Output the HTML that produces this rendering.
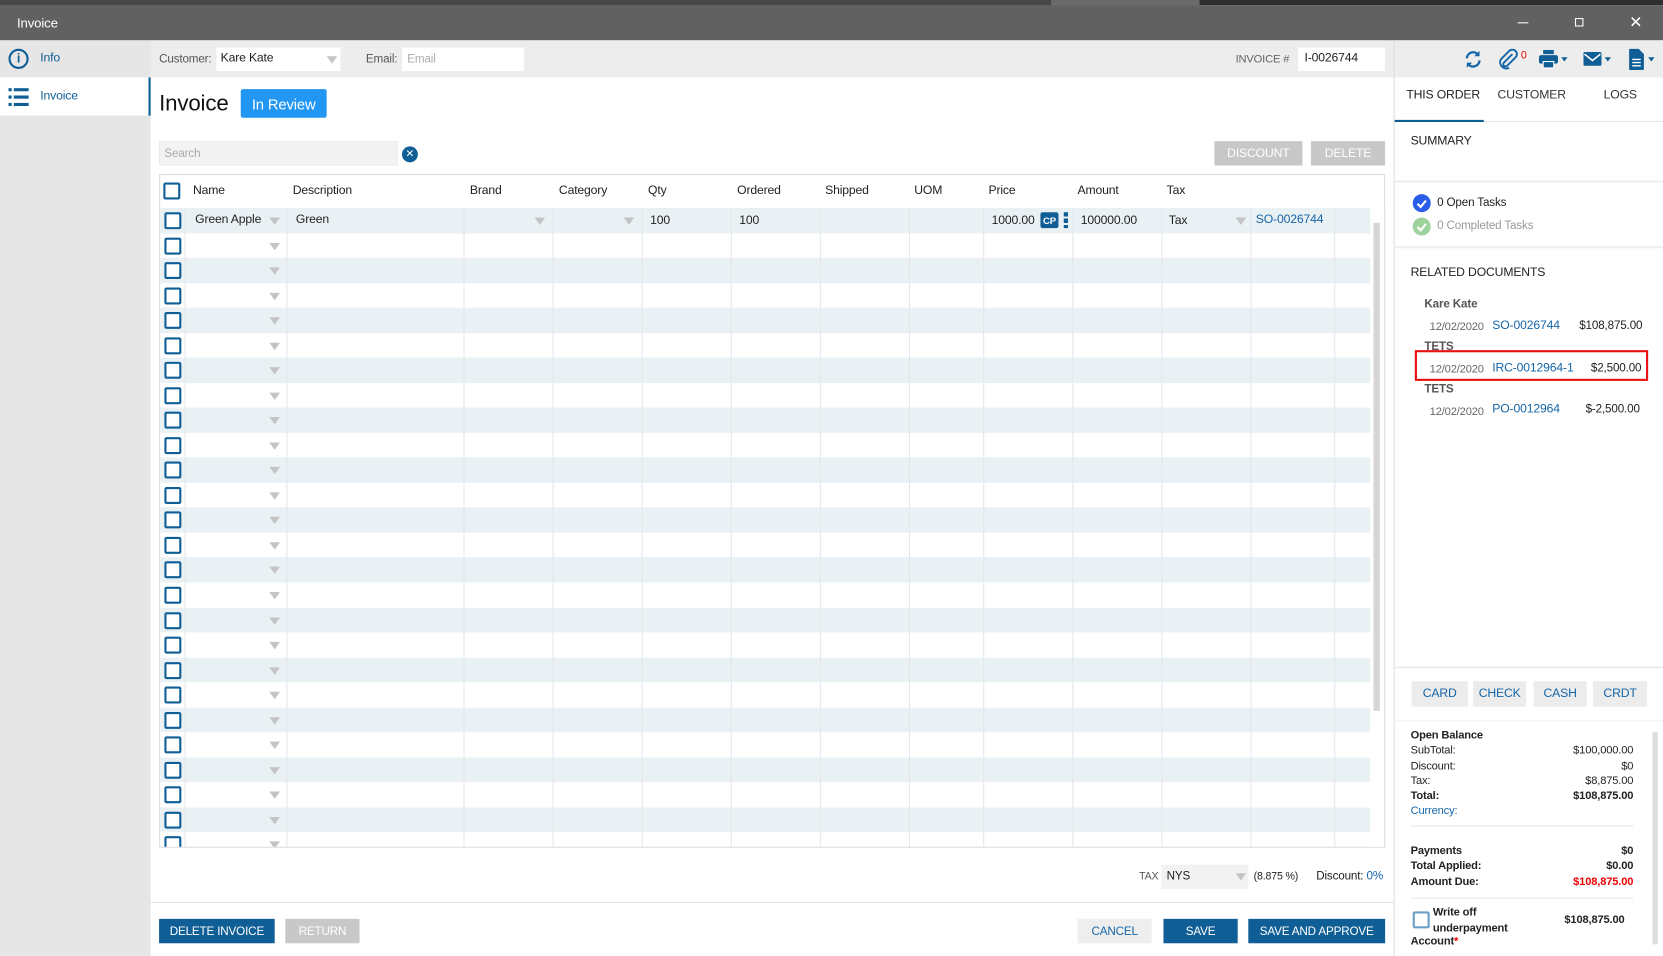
<!DOCTYPE html>
<html><head><meta charset="utf-8"><style>
*{box-sizing:border-box;margin:0;padding:0}
html,body{width:1663px;height:956px;overflow:hidden;background:#fff}
#r{position:absolute;left:0;top:0;width:1568px;height:901px;transform:scale(1.06059,1.06104);transform-origin:0 0;font-family:"Liberation Sans",sans-serif;font-size:11.5px;letter-spacing:-0.15px;color:#222}
.a{position:absolute}
.t{position:absolute;white-space:nowrap}
.btn{position:absolute;display:flex;align-items:center;justify-content:center;font-size:11.5px;color:#fff}
.cb{position:absolute;left:4px;top:4px;width:16px;height:16px;border:2px solid #0f5e95;border-radius:2px;background:#fff}
.dd{position:absolute;width:0;height:0;border-left:5px solid transparent;border-right:5px solid transparent;border-top:7px solid #c4c4c4}
.row{position:relative;height:23.54px}
.row:nth-child(odd){background:#eaf1f5}
.vl{position:absolute;top:31px;bottom:0;width:1px;background:#e3e7ea}
.lbl{font-size:11px}
.blue{color:#1565a8}
</style></head><body><div id="r">
<div class="a" style="left:0;top:0;width:1568px;height:5px;background:#2e2e2e"></div>
<div class="a" style="left:0;top:0;width:991px;height:5px;background:#474747"></div>
<div class="a" style="left:991px;top:0;width:140px;height:5px;background:#6a6a6a"></div>
<div class="a" style="left:0;top:5px;width:1568px;height:33px;background:#616161"></div>
<div class="t" style="left:16px;top:15px;color:#fff;font-size:12.5px">Invoice</div>
<div class="a" style="left:1431px;top:21px;width:10px;height:1px;background:#fff"></div>
<div class="a" style="left:1485px;top:17px;width:8px;height:8px;border:1px solid #fff"></div>
<div class="t" style="left:1536px;top:12px;color:#fff;font-size:15px">✕</div>
<div class="a" style="left:0;top:38px;width:142px;height:863px;background:#e6e6e6"></div>
<div class="a" style="left:0;top:73px;width:140px;height:36px;background:#fff"></div>
<div class="a" style="left:140px;top:73px;width:2px;height:36px;background:#0f5e95"></div>
<div class="a" style="left:8px;top:46px;width:19px;height:19px;border:2px solid #0f5e95;border-radius:50%;color:#0f5e95;font-weight:bold;font-size:12px;text-align:center;line-height:15px">i</div>
<div class="t blue" style="left:38px;top:49px;color:#0f5e95">Info</div>
<svg class="a" style="left:8px;top:83px" width="20" height="17"><g fill="#0f5e95"><rect x="0" y="0" width="3" height="3"/><rect x="5" y="0" width="14" height="3"/><rect x="0" y="7" width="3" height="3"/><rect x="5" y="7" width="14" height="3"/><rect x="0" y="14" width="3" height="3"/><rect x="5" y="14" width="14" height="3"/></g></svg>
<div class="t" style="left:38px;top:85px;color:#0f5e95">Invoice</div>
<div class="a" style="left:142px;top:38px;width:1426px;height:35px;background:#ededed"></div>
<div class="t lbl" style="left:150px;top:50px;color:#555">Customer:</div>
<div class="a" style="left:204px;top:45px;width:117px;height:22px;background:#fff"></div>
<div class="t" style="left:208px;top:49px">Kare Kate</div>
<div class="dd" style="left:308px;top:53px"></div>
<div class="t lbl" style="left:345px;top:50px;color:#555">Email:</div>
<div class="a" style="left:379px;top:45px;width:115px;height:22px;background:#fff"></div>
<div class="t lbl" style="left:384px;top:50px;color:#aaa">Email</div>
<div class="t" style="left:1165px;top:50px;color:#666;font-size:10.5px">INVOICE #</div>
<div class="a" style="left:1224px;top:45px;width:82px;height:22px;background:#fff"></div>
<div class="t" style="left:1230px;top:49px">I-0026744</div>
<div class="a" style="left:1314px;top:38px;width:1px;height:863px;background:#dcdcdc"></div>
<svg class="a" style="left:1380px;top:47px" width="18" height="18" viewBox="0 0 18 18"><path d="M3 8a6 6 0 0 1 11-3M15 10a6 6 0 0 1-11 3" stroke="#1565a8" stroke-width="2.2" fill="none"/><path d="M15 1v5h-5z M3 17v-5h5z" fill="#1565a8"/></svg>
<svg class="a" style="left:1412px;top:46px" width="20" height="20" viewBox="0 0 20 20"><path d="M14 5l-8 8a2 2 0 0 0 3 3l8-8a4 4 0 0 0-6-6l-8 8a6 6 0 0 0 8 8" stroke="#1565a8" stroke-width="1.8" fill="none"/></svg>
<div class="t" style="left:1434px;top:47px;color:#e00;font-size:10px">0</div>
<svg class="a" style="left:1451px;top:47px" width="30" height="18" viewBox="0 0 30 18"><rect x="4" y="0" width="10" height="4" fill="#0f5e95"/><rect x="0" y="5" width="18" height="8" rx="2" fill="#0f5e95"/><rect x="4" y="11" width="10" height="6" fill="#0f5e95" stroke="#fff" stroke-width="1"/><path d="M21 7h6l-3 4z" fill="#0f5e95"/></svg>
<svg class="a" style="left:1493px;top:48px" width="30" height="16" viewBox="0 0 30 16"><rect x="0" y="1" width="17" height="13" rx="1.5" fill="#0f5e95"/><path d="M1 3l7.5 6 7.5-6" stroke="#fff" stroke-width="1.5" fill="none"/><path d="M20 6h6l-3 4z" fill="#0f5e95"/></svg>
<svg class="a" style="left:1536px;top:46px" width="30" height="20" viewBox="0 0 30 20"><path d="M0 1a1 1 0 0 1 1-1h8l5 5v14a1 1 0 0 1-1 1H1a1 1 0 0 1-1-1z" fill="#0f5e95"/><path d="M3 10h8M3 13h8M3 16h8" stroke="#fff" stroke-width="1.3"/><path d="M18 8h6l-3 4z" fill="#0f5e95"/></svg>
<div class="t" style="left:1326px;top:84px;color:#222">THIS ORDER</div>
<div class="t" style="left:1412px;top:84px;color:#333">CUSTOMER</div>
<div class="t" style="left:1512px;top:84px;color:#333">LOGS</div>
<div class="a" style="left:1315px;top:114px;width:253px;height:1px;background:#e6e6e6"></div>
<div class="a" style="left:1315px;top:113px;width:84px;height:2px;background:#0f5e95"></div>
<div class="t" style="left:1330px;top:127px">SUMMARY</div>
<div class="a" style="left:1315px;top:170px;width:253px;height:2px;background:#eee"></div>
<div class="a" style="left:1332px;top:183px;width:17px;height:17px;border-radius:50%;background:#2a5ee8"></div>
<svg class="a" style="left:1332px;top:183px" width="17" height="17"><path d="M4.5 9l3 3 5-6" stroke="#fff" stroke-width="2" fill="none"/></svg>
<div class="t" style="left:1355px;top:185px;font-size:11px">0 Open Tasks</div>
<div class="a" style="left:1332px;top:205px;width:17px;height:17px;border-radius:50%;background:#9ed39e"></div>
<svg class="a" style="left:1332px;top:205px" width="17" height="17"><path d="M4.5 9l3 3 5-6" stroke="#fff" stroke-width="2" fill="none"/></svg>
<div class="t" style="left:1355px;top:207px;font-size:11px;color:#999">0 Completed Tasks</div>
<div class="a" style="left:1315px;top:232px;width:253px;height:2px;background:#eee"></div>
<div class="t" style="left:1330px;top:251px">RELATED DOCUMENTS</div>
<div class="t" style="left:1343px;top:281px;color:#555;font-weight:bold;font-size:11px">Kare Kate</div>
<div class="t" style="left:1348px;top:302px;color:#666;font-size:10.5px">12/02/2020</div>
<div class="t blue" style="left:1407px;top:301px">SO-0026744</div>
<div class="t" style="left:1489px;top:301px;font-size:11px">$108,875.00</div>
<div class="t" style="left:1343px;top:321px;color:#555;font-weight:bold;font-size:11px">TETS</div>
<div class="a" style="left:1334px;top:330px;width:220px;height:29px;border:2px solid #e81010;background:#fff"></div>
<div class="t" style="left:1348px;top:342px;color:#666;font-size:10.5px">12/02/2020</div>
<div class="t blue" style="left:1407px;top:341px">IRC-0012964-1</div>
<div class="t" style="left:1500px;top:341px;font-size:11px">$2,500.00</div>
<div class="t" style="left:1343px;top:361px;color:#555;font-weight:bold;font-size:11px">TETS</div>
<div class="t" style="left:1348px;top:382px;color:#666;font-size:10.5px">12/02/2020</div>
<div class="t blue" style="left:1407px;top:380px">PO-0012964</div>
<div class="t" style="left:1495px;top:380px;font-size:11px">$-2,500.00</div>
<div class="a" style="left:1315px;top:628px;width:253px;height:2px;background:#eee"></div>
<div class="btn" style="left:1331px;top:642px;width:53px;height:24px;background:#ececec;color:#1565a8">CARD</div>
<div class="btn" style="left:1389px;top:642px;width:50px;height:24px;background:#ececec;color:#1565a8">CHECK</div>
<div class="btn" style="left:1446px;top:642px;width:50px;height:24px;background:#ececec;color:#1565a8">CASH</div>
<div class="btn" style="left:1502px;top:642px;width:51px;height:24px;background:#ececec;color:#1565a8">CRDT</div>
<div class="a" style="left:1315px;top:679px;width:253px;height:1px;background:#eee"></div>
<div class="a" style="left:1558px;top:690px;width:5px;height:200px;background:#ddd"></div>
<div style="position:absolute;left:1330px;top:686px;width:210px;font-size:10.5px;line-height:14.3px">
<div style="font-weight:bold">Open Balance</div>
<div style="display:flex;justify-content:space-between"><span>SubTotal:</span><span>$100,000.00</span></div>
<div style="display:flex;justify-content:space-between"><span>Discount:</span><span>$0</span></div>
<div style="display:flex;justify-content:space-between"><span>Tax:</span><span>$8,875.00</span></div>
<div style="display:flex;justify-content:space-between;font-weight:bold"><span>Total:</span><span>$108,875.00</span></div>
<div class="blue">Currency:</div>
</div>
<div class="a" style="left:1330px;top:778px;width:210px;height:1px;background:#e6e6e6"></div>
<div style="position:absolute;left:1330px;top:795px;width:210px;font-size:10.5px;line-height:14.3px;font-weight:bold">
<div style="display:flex;justify-content:space-between"><span>Payments</span><span>$0</span></div>
<div style="display:flex;justify-content:space-between"><span>Total Applied:</span><span>$0.00</span></div>
<div style="display:flex;justify-content:space-between"><span>Amount Due:</span><span style="color:#e00">$108,875.00</span></div>
</div>
<div class="a" style="left:1330px;top:846px;width:210px;height:1px;background:#e6e6e6"></div>
<div class="a" style="left:1332px;top:859px;width:16px;height:16px;border:2px solid #6a9ec4;border-radius:2px"></div>
<div class="t" style="left:1351px;top:853px;font-weight:bold;font-size:10.5px;line-height:14.5px">Write off<br>underpayment</div>
<div class="t" style="left:1330px;top:881px;font-weight:bold;font-size:10.5px">Account<span style="color:#e00">*</span></div>
<div class="t" style="left:1475px;top:861px;font-weight:bold;font-size:10.5px">$108,875.00</div>
<div class="t" style="left:150px;top:86px;font-size:21px;color:#111">Invoice</div>
<div class="btn" style="left:227px;top:84px;width:81px;height:27px;background:#2196f3;border-radius:2px;font-size:14px">In Review</div>
<div class="a" style="left:150px;top:133px;width:225px;height:23px;background:#f3f3f3;border:1px solid #eaeaea"></div>
<div class="t lbl" style="left:155px;top:139px;color:#aaa">Search</div>
<div class="btn" style="left:379px;top:138px;width:15px;height:15px;border-radius:50%;background:#0f5e95;font-size:10px">✕</div>
<div class="btn" style="left:1145px;top:133px;width:83px;height:23px;background:#c8c8c8">DISCOUNT</div>
<div class="btn" style="left:1236px;top:133px;width:70px;height:23px;background:#c8c8c8">DELETE</div>
<div class="a" style="left:150px;top:164px;width:1156px;height:635px;border:1px solid #d8dee3;overflow:hidden">
 <div class="cb" style="left:3px;top:7px"></div>
 <div class="t" style="left:31px;top:9px">Name</div>
 <div class="t" style="left:125px;top:9px">Description</div>
 <div class="t" style="left:292px;top:9px">Brand</div>
 <div class="t" style="left:376px;top:9px">Category</div>
 <div class="t" style="left:460px;top:9px">Qty</div>
 <div class="t" style="left:544px;top:9px">Ordered</div>
 <div class="t" style="left:627px;top:9px">Shipped</div>
 <div class="t" style="left:711px;top:9px">UOM</div>
 <div class="t" style="left:781px;top:9px">Price</div>
 <div class="t" style="left:865px;top:9px">Amount</div>
 <div class="t" style="left:949px;top:9px">Tax</div>
 <div class="a" style="left:0;top:31px;width:1141px;">
 <div class="row"><div class="cb"></div><div class="t" style="left:33px;top:5px">Green Apple</div><div class="dd" style="left:103px;top:9px"></div><div class="t" style="left:128px;top:5px">Green</div><div class="dd" style="left:353px;top:9px"></div><div class="dd" style="left:437px;top:9px"></div><div class="t" style="left:462px;top:6px">100</div><div class="t" style="left:546px;top:6px">100</div><div class="t" style="left:784px;top:6px">1000.00</div><div class="btn" style="left:830px;top:4px;width:17px;height:15px;background:#0f5e95;border-radius:2px;font-size:9px;font-weight:bold">CP</div><div class="a" style="left:852px;top:4px;width:4px;height:15px;background:repeating-linear-gradient(#0f5e95 0 4px,transparent 4px 6px)"></div><div class="t" style="left:868px;top:6px">100000.00</div><div class="t" style="left:951px;top:6px">Tax</div><div class="dd" style="left:1014px;top:9px"></div><div class="t blue" style="left:1033px;top:5px">SO-0026744</div></div>
 <div class="row"><div class="cb"></div><div class="dd" style="left:103px;top:9px"></div></div>
 <div class="row"><div class="cb"></div><div class="dd" style="left:103px;top:9px"></div></div>
 <div class="row"><div class="cb"></div><div class="dd" style="left:103px;top:9px"></div></div>
 <div class="row"><div class="cb"></div><div class="dd" style="left:103px;top:9px"></div></div>
 <div class="row"><div class="cb"></div><div class="dd" style="left:103px;top:9px"></div></div>
 <div class="row"><div class="cb"></div><div class="dd" style="left:103px;top:9px"></div></div>
 <div class="row"><div class="cb"></div><div class="dd" style="left:103px;top:9px"></div></div>
 <div class="row"><div class="cb"></div><div class="dd" style="left:103px;top:9px"></div></div>
 <div class="row"><div class="cb"></div><div class="dd" style="left:103px;top:9px"></div></div>
 <div class="row"><div class="cb"></div><div class="dd" style="left:103px;top:9px"></div></div>
 <div class="row"><div class="cb"></div><div class="dd" style="left:103px;top:9px"></div></div>
 <div class="row"><div class="cb"></div><div class="dd" style="left:103px;top:9px"></div></div>
 <div class="row"><div class="cb"></div><div class="dd" style="left:103px;top:9px"></div></div>
 <div class="row"><div class="cb"></div><div class="dd" style="left:103px;top:9px"></div></div>
 <div class="row"><div class="cb"></div><div class="dd" style="left:103px;top:9px"></div></div>
 <div class="row"><div class="cb"></div><div class="dd" style="left:103px;top:9px"></div></div>
 <div class="row"><div class="cb"></div><div class="dd" style="left:103px;top:9px"></div></div>
 <div class="row"><div class="cb"></div><div class="dd" style="left:103px;top:9px"></div></div>
 <div class="row"><div class="cb"></div><div class="dd" style="left:103px;top:9px"></div></div>
 <div class="row"><div class="cb"></div><div class="dd" style="left:103px;top:9px"></div></div>
 <div class="row"><div class="cb"></div><div class="dd" style="left:103px;top:9px"></div></div>
 <div class="row"><div class="cb"></div><div class="dd" style="left:103px;top:9px"></div></div>
 <div class="row"><div class="cb"></div><div class="dd" style="left:103px;top:9px"></div></div>
 <div class="row"><div class="cb"></div><div class="dd" style="left:103px;top:9px"></div></div>
 <div class="row"><div class="cb"></div><div class="dd" style="left:103px;top:9px"></div></div>
 <div class="row"><div class="cb"></div><div class="dd" style="left:103px;top:9px"></div></div>
 </div>
 <div class="vl" style="left:23px"></div><div class="vl" style="left:119px"></div><div class="vl" style="left:286px"></div><div class="vl" style="left:370px"></div><div class="vl" style="left:454px"></div><div class="vl" style="left:538px"></div><div class="vl" style="left:622px"></div><div class="vl" style="left:706px"></div><div class="vl" style="left:776px"></div><div class="vl" style="left:860px"></div><div class="vl" style="left:944px"></div><div class="vl" style="left:1028px"></div><div class="vl" style="left:1107px"></div>
 <div class="a" style="left:1141px;top:31px;width:15px;height:604px;background:#fff"></div>
 <div class="a" style="left:1144px;top:45px;width:6px;height:460px;background:#d6d6d6"></div>
</div>
<div class="t" style="left:1074px;top:821px;font-size:10px;color:#555">TAX</div>
<div class="a" style="left:1095px;top:815px;width:82px;height:23px;background:#f2f2f2"></div>
<div class="t" style="left:1100px;top:820px;font-size:11px">NYS</div>
<div class="dd" style="left:1165px;top:823px"></div>
<div class="t" style="left:1182px;top:821px;font-size:10px">(8.875 %)</div>
<div class="t" style="left:1241px;top:820px;font-size:11px">Discount: <span class="blue">0%</span></div>
<div class="a" style="left:142px;top:850px;width:1172px;height:1px;background:#e4e4e4"></div>
<div class="btn" style="left:150px;top:866px;width:109px;height:23px;background:#0f5e95;font-size:11px">DELETE INVOICE</div>
<div class="btn" style="left:269px;top:866px;width:70px;height:23px;background:#c8c8c8;font-size:11px">RETURN</div>
<div class="btn" style="left:1016px;top:866px;width:70px;height:23px;background:#eeeeee;color:#1565a8;font-size:11px">CANCEL</div>
<div class="btn" style="left:1097px;top:866px;width:70px;height:23px;background:#0f5e95;font-size:11px">SAVE</div>
<div class="btn" style="left:1177px;top:866px;width:129px;height:23px;background:#0f5e95;font-size:11px">SAVE AND APPROVE</div>
</div></body></html>
